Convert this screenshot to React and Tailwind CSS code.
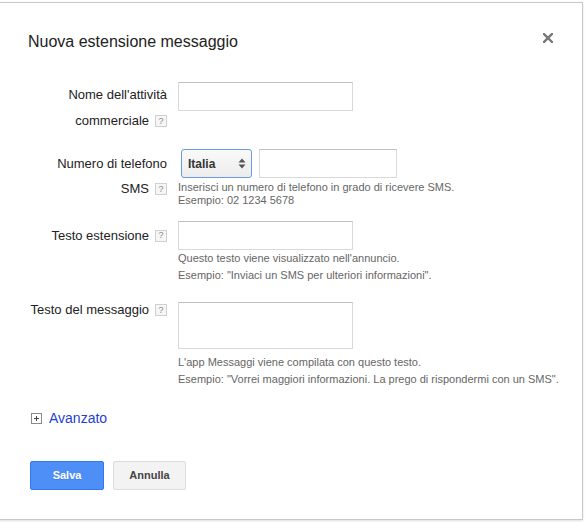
import React from 'react';

const Help = () => (
    <span className="ml-[6px] inline-flex h-[12px] w-[12px] items-center justify-center border border-[#d0d0d0] bg-[#f6f6f6] text-[9px] leading-none text-[#8a8a8a]">
        ?
    </span>
);

const inputClass = 'h-[29px] w-[175px] border border-[#d9d9d9] border-t-[#c0c0c0] bg-white';

const App = () => {
    return (
        <div className="h-[522px] w-[585px] overflow-hidden bg-white pt-[2px] font-['Liberation_Sans',Arial,sans-serif] text-[#222]">
            <div className="-ml-px h-[518px] w-[584px] border border-[#c8c8c8] shadow-[0_1px_2px_rgba(0,0,0,0.12)] pl-[28px] pr-[29px] pt-[29px]">
                {/* header */}
                <div className="flex items-start justify-between">
                    <h1 className="text-[16px] leading-[20px] font-normal">Nuova estensione messaggio</h1>
                    <button className="mt-[1px] p-0 text-[#777]" aria-label="Chiudi">
                        <svg width="10" height="10" viewBox="0 0 10 10">
                            <path d="M1 1 L9 9 M9 1 L1 9" stroke="currentColor" strokeWidth="2.4" strokeLinecap="square" />
                        </svg>
                    </button>
                </div>

                {/* Nome attività */}
                <div className="mt-[30px] flex gap-[11px]">
                    <div className="w-[139px] shrink-0 text-[13px]">
                        <div className="flex h-[26px] items-center justify-end">Nome dell'attività</div>
                        <div className="flex h-[26px] items-center justify-end">commerciale<Help /></div>
                    </div>
                    <input type="text" className={inputClass} />
                </div>

                {/* Numero di telefono */}
                <div className="mt-[15px] flex gap-[11px]">
                    <div className="w-[139px] shrink-0 text-[13px]">
                        <div className="flex h-[29px] items-center justify-end">Numero di telefono</div>
                        <div className="flex h-[22px] items-center justify-end">SMS<Help /></div>
                    </div>
                    <div>
                        <div className="flex gap-[7px]">
                            <div className="ml-[3px] flex h-[29px] w-[71px] items-center justify-between rounded-[3px] border border-[#6a9be8] bg-gradient-to-b from-[#fafafa] to-[#ececec] pl-[6px] pr-[5px]">
                                <span className="text-[12px] font-bold text-[#333]">Italia</span>
                                <svg width="8" height="11" viewBox="0 0 8 11">
                                    <path d="M4 0.5 L7.5 4.5 L0.5 4.5 Z M4 10.5 L7.5 6.5 L0.5 6.5 Z" fill="#555" />
                                </svg>
                            </div>
                            <input type="text" className="h-[29px] w-[138px] border border-[#d9d9d9] border-t-[#c0c0c0] bg-white" />
                        </div>
                        <div className="mt-[3px] text-[11px] leading-[13px] text-[#666]">
                            <div>Inserisci un numero di telefono in grado di ricevere SMS.</div>
                            <div>Esempio: 02 1234 5678</div>
                        </div>
                    </div>
                </div>

                {/* Testo estensione */}
                <div className="mt-[14px] flex gap-[11px]">
                    <div className="w-[139px] shrink-0 text-[13px]">
                        <div className="flex h-[29px] items-center justify-end">Testo estensione<Help /></div>
                    </div>
                    <div>
                        <input type="text" className={inputClass} />
                        <div className="text-[11px] leading-[17px] text-[#666]">
                            <div>Questo testo viene visualizzato nell'annuncio.</div>
                            <div>Esempio: "Inviaci un SMS per ulteriori informazioni".</div>
                        </div>
                    </div>
                </div>

                {/* Testo del messaggio */}
                <div className="mt-[18px] flex gap-[11px]">
                    <div className="w-[139px] shrink-0 text-[13px]">
                        <div className="flex h-[16px] items-center justify-end">Testo del messaggio<Help /></div>
                    </div>
                    <div className="min-w-0">
                        <textarea className="block h-[47px] w-[175px] resize-none border border-[#d9d9d9] border-t-[#c0c0c0] bg-white" />
                        <div className="mt-[5px] whitespace-nowrap text-[11px] leading-[17px] text-[#666]">
                            <div>L'app Messaggi viene compilata con questo testo.</div>
                            <div>Esempio: "Vorrei maggiori informazioni. La prego di rispondermi con un SMS".</div>
                        </div>
                    </div>
                </div>

                {/* Avanzato */}
                <div className="mt-[21px] ml-[3px] flex h-[18px] items-center gap-[7px]">
                    <svg width="11" height="11" viewBox="0 0 11 11">
                        <rect x="0.5" y="0.5" width="10" height="10" fill="#fff" stroke="#8a8a8a" />
                        <path d="M3 5.5 H8 M5.5 3 V8" stroke="#444" strokeWidth="1" />
                    </svg>
                    <a href="#" className="text-[14px] text-[#1f3fd0]">Avanzato</a>
                </div>

                {/* buttons */}
                <div className="mt-[34px] ml-[2px] flex gap-[9px]">
                    <button className="h-[29px] w-[74px] rounded-[2px] border border-[#3079ed] bg-[#4d8ff7] text-[11px] font-bold text-white [text-shadow:0_1px_rgba(0,0,0,0.1)]">
                        Salva
                    </button>
                    <button className="h-[29px] w-[73px] rounded-[2px] border border-[#dcdcdc] bg-[#f3f3f3] text-[11px] font-bold text-[#444]">
                        Annulla
                    </button>
                </div>
            </div>
        </div>
    );
};

export default App;
